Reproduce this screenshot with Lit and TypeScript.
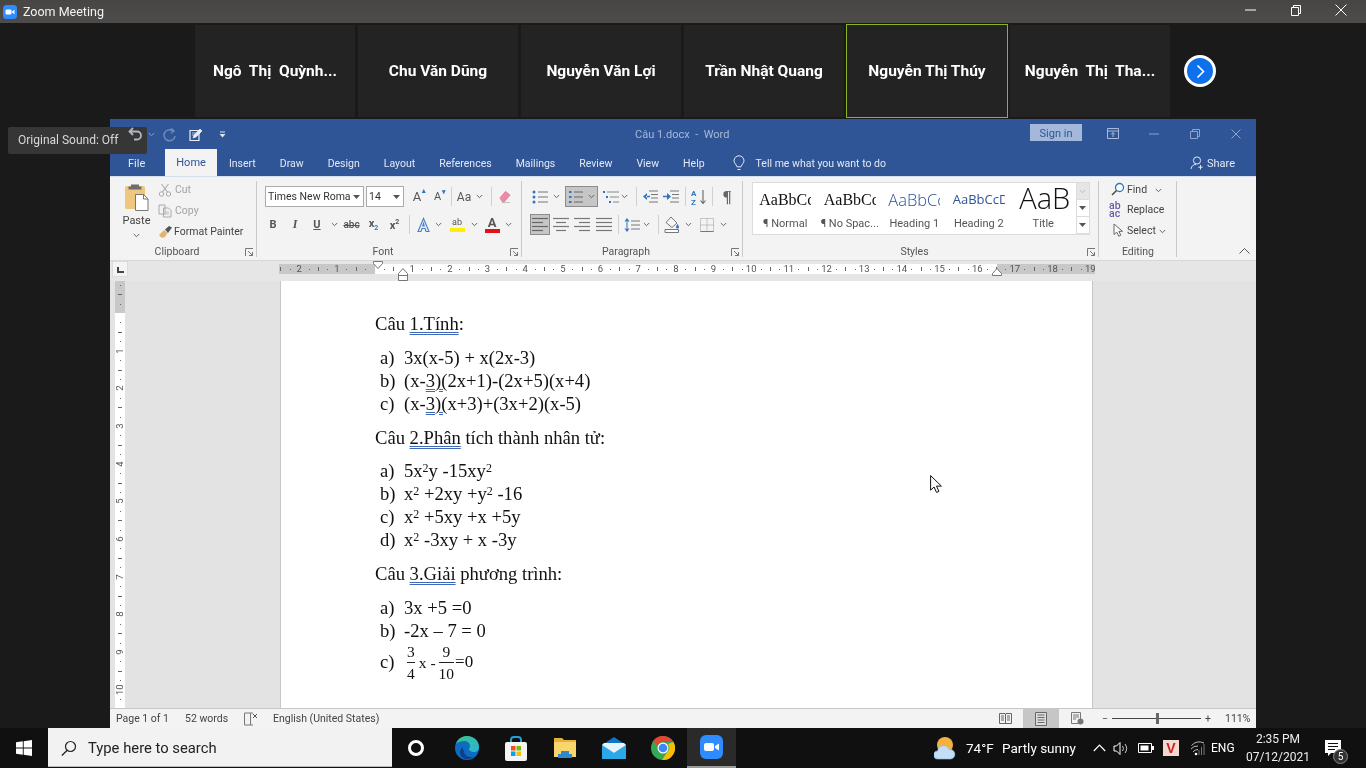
import { LitElement, html, css, nothing } from 'lit';
import { customElement } from 'lit/decorators.js';

const chev = (c = '#666') => html`<svg width="7" height="5" viewBox="0 0 7 5"><path d="M.8 1l2.7 2.7L6.2 1" fill="none" stroke="${c}"/></svg>`;
const caret = html`<svg width="7" height="4" viewBox="0 0 7 4"><path d="M0 0h7L3.5 4z" fill="#555"/></svg>`;
const launcher = html`<svg width="9" height="9" viewBox="0 0 9 9"><path d="M.5 8V.5H8M3 3l4.500 4.500M7.500 4v3.500H4" fill="none" stroke="#777"/></svg>`;
const sep = html`<i class="sep"></i>`;

const lines = (rows: number[][], color = '#777') => html`<svg width="18" height="15" viewBox="0 0 18 15">${rows.map(
  ([x1, x2], i) => html`<svg><path d="M${x1} ${1.5 + i * 4}H${x2}" stroke="${color}" stroke-width="1.2"/></svg>`,
)}</svg>`;

const icons = {
  zoomLogo: html`<svg width="14" height="14" viewBox="0 0 14 14"><rect width="14" height="14" rx="3.5" fill="#2d8cff"/><rect x="2.5" y="4.5" width="6" height="5" rx="1.2" fill="#fff"/><path d="M9 6.500l2.500-1.700v4.400L9 7.500z" fill="#fff"/></svg>`,
  undo: html`<svg width="16" height="18" viewBox="0 0 16 18"><path d="M5 2L1.500 5.500 5 9M2 5.500h7a4 4 0 0 1 0 8H6" fill="none" stroke="#aeb6c4" stroke-width="1.800"/></svg>`,
  redo: html`<svg width="14" height="16" viewBox="0 0 14 16"><path d="M8 1.500l3 2.500-3 2M10 4A5.500 5.500 0 1 0 12 9" fill="none" stroke="#6f8cbd" stroke-width="1.500"/></svg>`,
  touch: html`<svg width="15" height="15" viewBox="0 0 15 15"><path d="M1 3.500h9v10H1z" fill="none" stroke="#e8edf5" stroke-width="1.200"/><path d="M4 11l1-3 6-6 2 2-6 6zM3 6h4M3 8h2" fill="#e8edf5" stroke="#e8edf5" stroke-width=".7"/></svg>`,
  qatDrop: html`<svg width="7" height="7" viewBox="0 0 7 7"><path d="M1 1h5" stroke="#dfe6f2"/><path d="M.5 3h6L3.500 6.500z" fill="#dfe6f2"/></svg>`,
  ribbonDisp: html`<svg width="12" height="11" viewBox="0 0 12 11"><path d="M.5.500h11v10H.5zM.5 3h11M6 9V4.500M4 6.500l2-2 2 2" fill="none" stroke="#a9bcdc"/></svg>`,
  minW: html`<svg width="10" height="2" viewBox="0 0 10 2"><path d="M0 1h10" stroke="#8da4cb"/></svg>`,
  restoreW: html`<svg width="10" height="10" viewBox="0 0 10 10"><path d="M.5 2.500h7v7h-7zM2.500 2.500v-2h7v7h-2" fill="none" stroke="#8da4cb"/></svg>`,
  closeW: html`<svg width="10" height="10" viewBox="0 0 10 10"><path d="M.5.500l9 9M9.500.500l-9 9" stroke="#8da4cb"/></svg>`,
  bulb: html`<svg width="12" height="16" viewBox="0 0 12 16"><path d="M6 .8a5 5 0 0 0-5 5c0 2.200 2.200 3.400 3 6h4c.8-2.600 3-3.800 3-6a5 5 0 0 0-5-5zM4.500 14.500h3" fill="none" stroke="#e5ebf5"/></svg>`,
  share: html`<svg width="14" height="14" viewBox="0 0 14 14"><circle cx="7" cy="4.500" r="3.600" fill="none" stroke="#dfe6f2"/><path d="M1 13c.4-3 2.500-4.500 5-4.600M10.500 9v4.500M8.300 11.200h4.400" fill="none" stroke="#dfe6f2"/></svg>`,
  paste: html`<svg width="26" height="28" viewBox="0 0 26 28"><rect x="1" y="3" width="20" height="23" rx="1.500" fill="#eec67e"/><path d="M7 1.500h8v2h2.500v3h-13v-3H7z" fill="#6d6d6d"/><path d="M11.500 11.500h8l4.500 4.500v11.500h-12.500z" fill="#fff" stroke="#777"/><path d="M19.500 11.500V16H24" fill="none" stroke="#777"/></svg>`,
  cut: html`<svg width="14" height="14" viewBox="0 0 14 14"><path d="M3.500 1l6 8M10.500 1l-6 8" stroke="#aaa" stroke-width="1.100"/><circle cx="3.500" cy="11" r="2.200" fill="none" stroke="#aaa"/><circle cx="10.500" cy="11" r="2.200" fill="none" stroke="#aaa"/></svg>`,
  copy: html`<svg width="14" height="14" viewBox="0 0 14 14"><path d="M1 1h6v9H1zM5.500 4h5l2.500 2.500V13H5.500z" fill="#f3f3f3" stroke="#aaa"/><path d="M7 8h4M7 10h4" stroke="#bbb"/></svg>`,
  painter: html`<svg width="15" height="13" viewBox="0 0 15 13"><path d="M1 10l5-5 3.500 3-3 4.500H3z" fill="#e2b56f"/><path d="M7 4.500L11 1l3 1.500L10 8z" fill="#555"/></svg>`,
  eraser: html`<svg width="15" height="15" viewBox="0 0 15 15"><path d="M2 9l6-7 5 4-6 7H4.500z" fill="#ef8aa6" stroke="#d9688a" stroke-width=".6"/><path d="M4 14h9" stroke="#bbb"/></svg>`,
  textFx: html`<svg width="15" height="16" viewBox="0 0 15 16"><path d="M7.500 1.500L2 14.500h3l1-3h3l1 3h3zM6.800 9l.7-2.500.7 2.500z" fill="#e7eef8" stroke="#4a7fc4" stroke-width="1.100"/></svg>`,
  bullets: html`<svg width="16" height="14" viewBox="0 0 16 14"><path d="M6 2h10M6 7h10M6 12h10" stroke="#777" stroke-width="1.100"/><circle cx="2" cy="2" r="1.500" fill="#2f75c0"/><circle cx="2" cy="7" r="1.500" fill="#2f75c0"/><circle cx="2" cy="12" r="1.500" fill="#2f75c0"/></svg>`,
  numbers: html`<svg width="15" height="14" viewBox="0 0 15 14"><path d="M6 2h9M6 7h9M6 12h9" stroke="#666" stroke-width="1.100"/><path d="M1 1h2.500v2H1zM1 6h2.500v2H1zM1 11h2.500v2H1z" fill="#2f75c0"/></svg>`,
  multi: html`<svg width="17" height="14" viewBox="0 0 17 14"><path d="M5 2h12M8 7h9M11 12h6" stroke="#888" stroke-width="1.100"/><path d="M1 1h2v2H1zM4 6h2v2H4zM7 11h2v2H7z" fill="#2f75c0"/></svg>`,
  outdent: html`<svg width="16" height="13" viewBox="0 0 16 13"><path d="M7 1h9M9 4.500h7M9 8h7M7 12h9" stroke="#777"/><path d="M5 3L1 6.500 5 10zM4 5.800h4v1.400H4z" fill="#2f75c0"/></svg>`,
  indent: html`<svg width="16" height="13" viewBox="0 0 16 13"><path d="M7 1h9M9 4.500h7M9 8h7M7 12h9" stroke="#777"/><path d="M4 3l4 3.500L4 10zM0 5.800h5v1.400H0z" fill="#2f75c0"/></svg>`,
  sort: html`<svg width="16" height="16" viewBox="0 0 16 16"><text x="0" y="7" font-size="8" font-family="Roboto" font-weight="700" fill="#2f75c0">A</text><text x="0" y="15.500" font-size="8" font-family="Roboto" font-weight="700" fill="#2f75c0">Z</text><path d="M12 1v13M9.500 11.500L12 14.500l2.500-3" fill="none" stroke="#666" stroke-width="1.100"/></svg>`,
  spacing: html`<svg width="16" height="16" viewBox="0 0 16 16"><path d="M7 4h9M7 8h9M7 12h9" stroke="#777"/><path d="M3 1L.5 4.500h5zM3 15l2.500-3.500h-5zM2.500 4h1v8h-1z" fill="#2f75c0"/></svg>`,
  shade: html`<svg width="16" height="17" viewBox="0 0 16 17"><path d="M7 1l6 6-5 4.500-6-5z" fill="#f6f6f6" stroke="#777"/><path d="M13.500 8s1.500 2 1.500 3a1.500 1.500 0 0 1-3 0c0-1 1.500-3 1.500-3z" fill="#2f75c0"/><path d="M1 13.500h13.500v3H1z" fill="#fff" stroke="#777"/></svg>`,
  borders: html`<svg width="14" height="14" viewBox="0 0 14 14"><path d="M.5.500h13v13H.5zM7 .5v13M.5 7h13" fill="none" stroke="#999" stroke-dasharray="1 1"/><path d="M.5 13.500h13" stroke="#777"/></svg>`,
  find: html`<svg width="14" height="14" viewBox="0 0 14 14"><circle cx="8.500" cy="5.500" r="4" fill="#fff" stroke="#2f75c0" stroke-width="1.300"/><path d="M5.500 8.500L1 13" stroke="#444" stroke-width="1.500"/></svg>`,
  select: html`<svg width="10" height="14" viewBox="0 0 10 14"><path d="M1 1v10.500l2.800-2.300 2 4 2-1-2-3.900H9.500z" fill="#fff" stroke="#666"/></svg>`,
  collapse: html`<svg width="11" height="6" viewBox="0 0 11 6"><path d="M.5 5.500l5-5 5 5" fill="none" stroke="#555"/></svg>`,
  book: html`<svg width="14" height="14" viewBox="0 0 14 14"><path d="M.5 1h6v12h-6zM6.500 1H9M6.500 13H9" fill="none" stroke="#777"/><path d="M9 2l4 4M13 2L9 6" stroke="#555"/></svg>`,
  readMode: html`<svg width="13" height="13" viewBox="0 0 13 13"><path d="M.5 1.500h5.500l.5.5.5-.5h5.500v10H7l-.5.5-.5-.5H.5zM6.500 2v10M2 4h3M2 6h3M2 8h3M8 4h3M8 6h3M8 8h3" fill="#f3f3f3" stroke="#666"/></svg>`,
  printMode: html`<svg width="12" height="14" viewBox="0 0 12 14"><path d="M.5.500h11v13H.5zM2.500 3h7M2.500 5.500h7M2.500 8h7M2.500 10.500h7" fill="#ddd" stroke="#666"/></svg>`,
  webMode: html`<svg width="13" height="13" viewBox="0 0 13 13"><path d="M.5.500h9v11H.5zM2 3h6M2 5h6M2 7h3" fill="#f3f3f3" stroke="#777"/><circle cx="9.500" cy="9.500" r="3" fill="#777"/></svg>`,
  windows: html`<svg width="16" height="16" viewBox="0 0 16 16"><path d="M0 2.300l6.800-1v6.200H0zM7.700 1.200L16 0v7.500H7.700zM0 8.500h6.800v6.200l-6.800-1zM7.700 8.500H16V16l-8.300-1.200z" fill="#fff"/></svg>`,
  search: html`<svg width="16" height="16" viewBox="0 0 16 16"><circle cx="9.500" cy="6.500" r="5" fill="none" stroke="#222" stroke-width="1.200"/><path d="M6 10.500L.8 15.500" stroke="#222" stroke-width="1.300"/></svg>`,
  edge: html`<svg width="24" height="26" viewBox="0 0 24 26"><defs><linearGradient id="eg" x1="0" y1="0" x2="1" y2="1"><stop offset="0" stop-color="#39c481"/><stop offset="1" stop-color="#2cb2d8"/></linearGradient></defs><circle cx="12" cy="13" r="12" fill="#0b6cc0"/><path d="M1 9C3 3 8 1 12 1c7 0 12 5 12 11 0 3-2 5-5 5-2 0-5-1-5-3 0-1 1-1 1-3 0-3-3-5-6-5S3 7 1 9z" fill="url(#eg)"/><path d="M9 16c0 4 4 7 9 6-3 3-9 3-12-1-2-3-1-7 2-9-.5 1.500 0 3 1 4z" fill="#0d3f8f"/></svg>`,
  store: html`<svg width="24" height="25" viewBox="0 0 24 25"><path d="M7 7V4a3 3 0 0 1 3-3h4a3 3 0 0 1 3 3v3" fill="none" stroke="#1ea0d8" stroke-width="2"/><rect x="1" y="6" width="22" height="19" rx="2" fill="#f4f4f4"/><rect x="7" y="10" width="4.500" height="4.500" fill="#f25022"/><rect x="12.500" y="10" width="4.500" height="4.500" fill="#7fba00"/><rect x="7" y="15.500" width="4.500" height="4.500" fill="#00a4ef"/><rect x="12.500" y="15.500" width="4.500" height="4.500" fill="#ffb900"/></svg>`,
  folder: html`<svg width="22" height="22" viewBox="0 0 22 22"><path d="M0 1h8l2 2h12v17H0z" fill="#e8b237"/><path d="M0 5h22v15H0z" fill="#f9d56e"/><path d="M7 14h8v3h3v4H4v-4h3z" fill="#2f88c9"/></svg>`,
  mail: html`<svg width="24" height="22" viewBox="0 0 24 22"><path d="M0 8L12 0l12 8v14H0z" fill="#0f75c9"/><path d="M0 8l12 8 12-8v14H0z" fill="#29a8ea"/><path d="M2 6h20l2 2-12 8L0 8z" fill="#e8f4fb"/></svg>`,
  chrome: html`<svg width="24" height="24" viewBox="0 0 24 24"><circle cx="12" cy="12" r="12" fill="#34a853"/><path d="M12 0a12 12 0 0 1 10.400 6H12a6 6 0 0 0-5.600 3.700L2.300 5A12 12 0 0 1 12 0z" fill="#ea4335"/><path d="M22.400 6A12 12 0 0 1 11 24l5.500-8.300A6 6 0 0 0 17 8L22.400 6z" fill="#fbbc05"/><circle cx="12" cy="12" r="5.500" fill="#fff"/><circle cx="12" cy="12" r="4.300" fill="#4285f4"/></svg>`,
  zoomApp: html`<svg width="23" height="24" viewBox="0 0 23 24"><rect width="23" height="24" rx="6" fill="#2d8cff"/><rect x="4" y="8" width="10" height="8" rx="2" fill="#fff"/><path d="M15 11l4-2.500v7L15 13z" fill="#fff"/></svg>`,
  weather: html`<svg width="22" height="24" viewBox="0 0 22 24"><circle cx="11" cy="9" r="8" fill="#f5b13d"/><path d="M4 23a4 4 0 0 1-.5-8A6 6 0 0 1 15 13.500 4.800 4.800 0 0 1 17 23z" fill="#c4def5" stroke="#8fc0e8" stroke-width=".6"/></svg>`,
  trayUp: html`<svg width="13" height="8" viewBox="0 0 13 8"><path d="M.8 7l5.700-6 5.700 6" fill="none" stroke="#fff" stroke-width="1.200"/></svg>`,
  speaker: html`<svg width="16" height="15" viewBox="0 0 16 15"><path d="M1 5h2.500L7 1.500v12L3.500 10H1z" fill="none" stroke="#fff"/><path d="M9.500 5a4 4 0 0 1 0 5M12 3a7 7 0 0 1 0 9" fill="none" stroke="#ccc"/></svg>`,
  battery: html`<svg width="16" height="10" viewBox="0 0 16 10"><path d="M.5.500h13v9H.5z" fill="none" stroke="#fff"/><path d="M2.500 2.500h8v5h-8zM14 3h2v4h-2z" fill="#fff"/></svg>`,
  wifi: html`<svg width="15" height="15" viewBox="0 0 15 15"><path d="M1 8a8 8 0 0 1 7-3M3 11a6 6 0 0 1 5-2.500M1.500 4.500A11 11 0 0 1 14 2" fill="none" stroke="#bbb"/><circle cx="6" cy="13" r="1.300" fill="#fff"/><path d="M9 14V9M11.500 14V6M14 14V3" stroke="#777"/></svg>`,
  notes: html`<svg width="18" height="17" viewBox="0 0 18 17"><path d="M0 0h16v13H6l-3 3v-3H0z" fill="#fff"/><path d="M3 3.500h10M3 6.500h10M3 9.500h7" stroke="#101010"/></svg>`,
  pointer: html`<svg width="12" height="18" viewBox="0 0 12 18"><path d="M.6.600v14.600l3.500-3.200 2.400 5.400 2.400-1-2.400-5.300h4.900z" fill="#fff" stroke="#111"/></svg>`,
};

@customElement('word-ribbon')
export class WordRibbon extends LitElement {
  static styles = css`
    :host { display: flex; height: 84px; box-sizing: border-box; background: #f3f3f3; border-top: 1px solid #d5deec; color: #444; font: 10.500px Roboto, sans-serif; }
    .group { position: relative; box-sizing: border-box; display: flex; flex-direction: column; }
    .group::after { content: ''; position: absolute; right: 0; top: 4px; bottom: 3px; width: 1px; background: #c9c9c9; }
    .label { position: absolute; left: 0; right: 13px; bottom: 1px; text-align: center; line-height: 15px; color: #555; }
    .edit .label { right: 0; }
    .launch { position: absolute; right: 3px; bottom: 3px; line-height: 0; }
    .clip { width: 147px; flex-direction: row; padding-top: 2px; }
    .paste { width: 48px; display: flex; flex-direction: column; align-items: center; padding: 4px 0 0 5px; box-sizing: border-box; }
    .paste span { line-height: 16px; margin-top: 2px; font-size: 11px; }
    .paste > svg:last-child { margin-top: 4px; }
    .clip-list { display: flex; flex-direction: column; }
    .clip-row { height: 21px; display: flex; align-items: center; gap: 3px; }
    .clip-row.off { color: #a3a3a3; }
    .clip-row.paint { gap: 1px; }
    .clip-row svg { flex: none; }
    .font { width: 265px; padding: 9px 0 0 8px; }
    .para { width: 221px; padding: 9px 0 0 8px; }
    .row { display: flex; height: 21px; align-items: center; margin-bottom: 7px; }
    .row.pull { margin-left: -3px; }
    .cell { display: flex; align-items: center; justify-content: center; height: 21px; flex: none; }
    .cell.sel { background: #c6c6c6; box-shadow: inset 0 0 0 1px #8c8c8c; }
    .sep { display: block; width: 1px; height: 19px; background: #d0d0d0; }
    .box { display: flex; align-items: center; justify-content: space-between; box-sizing: border-box; height: 21px; border: 1px solid #ababab; background: #fff; color: #333; padding: 0 3px 0 2px; flex: none; white-space: nowrap; overflow: hidden; }
    .glyph { color: #555; font-weight: 700; font-size: 11px; }
    .glyph.serif { font-family: 'Liberation Serif', serif; font-style: italic; font-size: 12px; }
    .glyph.ul { text-decoration: underline; }
    .fontA { font-size: 13px; font-weight: 400; position: relative; }
    .fontA b { position: absolute; top: -2px; right: -5px; font-size: 7px; color: #2f75c0; }
    .hl { display: flex; flex-direction: column; align-items: center; font-size: 9px; line-height: 10px; color: #555; }
    .hl i { width: 15px; height: 4px; margin-top: 1px; }
    .hl .big { font-size: 13px; font-weight: 700; line-height: 11px; }
    .styles { width: 356px; padding: 5px 0 0 9px; }
    .gallery { display: flex; width: 338px; height: 53px; box-sizing: border-box; background: #fff; border: 1px solid #dcdcdc; }
    .style { width: 64.500px; flex: none; display: flex; flex-direction: column; align-items: center; }
    .style .pv { width: 52px; height: 33px; overflow: hidden; white-space: nowrap; color: #111; font: 16px/33px 'Liberation Serif', serif; }
    .style .nm { line-height: 16px; color: #555; white-space: nowrap; font-size: 11px; }
    .style.h1 .pv { font: 300 16.500px/33px 'Open Sans', sans-serif; color: #2f5496; }
    .style.h2 .pv { font: 400 13px/33px 'Open Sans', sans-serif; color: #2f5496; }
    .style.title .pv { font: 300 29px/29px 'Open Sans', sans-serif; color: #111; padding-left: 2px; box-sizing: border-box; }
    .scroll { margin-left: auto; width: 13px; display: flex; flex-direction: column; border-left: 1px solid #dcdcdc; }
    .scroll span { flex: 1; display: flex; align-items: center; justify-content: center; border-bottom: 1px solid #dcdcdc; }
    .scroll span:first-child { background: #e6e6e6; }
    .edit { width: 78px; padding: 2px 0 0 10px; }
    .edit-row { height: 20.500px; display: flex; align-items: center; }
    .edit-row .ic { width: 18px; display: flex; justify-content: center; }
    .edit-row .abac { justify-content: flex-start; font-size: 10.500px; line-height: 8px; color: #6b5aa8; font-weight: 500; }
    .collapse { margin-left: 62px; margin-top: 71px; line-height: 0; }
  `;

  private cells(list: [number, unknown, string?][]) {
    return list.map(([w, c, cls]) => html`<span class="cell ${cls ?? ''}" style="width:${w}px">${c}</span>`);
  }

  render() {
    const c = chev();
    return html`
      <div class="group clip">
        <div class="paste">${icons.paste}<span>Paste</span>${c}</div>
        <div class="clip-list">
          <div class="clip-row off">${icons.cut}<span>Cut</span></div>
          <div class="clip-row off">${icons.copy}<span>Copy</span></div>
          <div class="clip-row paint">${icons.painter}<span>Format Painter</span></div>
        </div>
        <span class="label">Clipboard</span><span class="launch">${launcher}</span>
      </div>

      <div class="group font">
        <div class="row">
          <span class="box" style="width:99px">Times New Roma ${caret}</span>
          <span style="width:2px"></span>
          <span class="box" style="width:38px">14 ${caret}</span>
          ${this.cells([
            [3, nothing],
            [20, html`<span class="glyph fontA">A<b>▴</b></span>`],
            [21, html`<span class="glyph fontA" style="font-size:11px">A<b>▾</b></span>`],
            [6, sep],
            [20, html`<span style="font-size:12px;color:#555">Aa</span>`],
            [10, c],
            [14, sep],
            [14, icons.eraser],
          ])}
        </div>
        <div class="row pull">
          ${this.cells([
            [22, html`<span class="glyph">B</span>`],
            [22, html`<span class="glyph serif">I</span>`],
            [22, html`<span class="glyph ul">U</span>`],
            [12, c],
            [23, html`<s class="glyph" style="font-size:10px;font-weight:500">abc</s>`],
            [21, html`<span class="glyph">x<sub style="font-size:7px;color:#2f75c0">2</sub></span>`],
            [21, html`<span class="glyph">x<sup style="font-size:7px">2</sup></span>`],
            [8, sep],
            [20, icons.textFx],
            [11, c],
            [26, html`<span class="hl"><span>ab</span><i style="background:#ffef00"></i></span>`],
            [8, c],
            [2, nothing],
            [24, html`<span class="hl"><span class="big">A</span><i style="background:#e0101c"></i></span>`],
            [8, c],
          ])}
        </div>
        <span class="label">Font</span><span class="launch">${launcher}</span>
      </div>

      <div class="group para">
        <div class="row">
          ${this.cells([
            [20, icons.bullets],
            [12, c],
            [3, nothing],
            [33, html`${icons.numbers}<span style="width:5px"></span>${c}`, 'sel'],
            [2, nothing],
            [20, icons.multi],
            [9, c],
            [3, nothing],
            [8, sep],
            [20, icons.outdent],
            [21, icons.indent],
            [8, sep],
            [20, icons.sort],
            [6, sep],
            [2, nothing],
            [20, html`<span style="font:700 17px 'Liberation Serif',serif;color:#666">¶</span>`],
          ])}
        </div>
        <div class="row">
          ${this.cells([
            [20, lines([[1, 17], [1, 12], [1, 17], [1, 12]], '#666'), 'sel'],
            [1, nothing],
            [20, lines([[1, 17], [4, 14], [1, 17], [4, 14]])],
            [1, nothing],
            [20, lines([[1, 17], [6, 17], [1, 17], [6, 17]])],
            [2, nothing],
            [20, lines([[1, 17], [1, 17], [1, 17], [1, 17]])],
            [8, sep],
            [20, icons.spacing],
            [8, c],
            [4, nothing],
            [8, sep],
            [20, icons.shade],
            [12, c],
            [3, nothing],
            [20, icons.borders],
            [12, c],
          ])}
        </div>
        <span class="label">Paragraph</span><span class="launch">${launcher}</span>
      </div>

      <div class="group styles">
        <div class="gallery">
          <div class="style"><span class="pv">AaBbCc</span><span class="nm">¶ Normal</span></div>
          <div class="style"><span class="pv">AaBbCc</span><span class="nm">¶ No Spac...</span></div>
          <div class="style h1"><span class="pv">AaBbCc</span><span class="nm">Heading 1</span></div>
          <div class="style h2"><span class="pv">AaBbCcD</span><span class="nm">Heading 2</span></div>
          <div class="style title"><span class="pv">AaB</span><span class="nm">Title</span></div>
          <div class="scroll"><span>${chev('#bbb')}</span><span>${caret}</span><span>${caret}</span></div>
        </div>
        <span class="label">Styles</span><span class="launch">${launcher}</span>
      </div>

      <div class="group edit">
        <div class="edit-row"><span class="ic">${icons.find}</span><span>Find</span><span style="margin-left:8px">${c}</span></div>
        <div class="edit-row"><span class="ic abac">ab<br />ac</span><span>Replace</span></div>
        <div class="edit-row"><span class="ic">${icons.select}</span><span>Select</span><span style="margin-left:3px">${c}</span></div>
        <span class="label">Editing</span>
      </div>
      <div class="collapse">${icons.collapse}</div>
    `;
  }
}

@customElement('word-window')
export class WordWindow extends LitElement {
  static styles = css`
    :host { display: flex; flex-direction: column; width: 1146px; height: 609px; margin-left: 110px; font: 11px Roboto, sans-serif; }
    .title { height: 31px; background: #2f5597; display: flex; align-items: center; position: relative; flex: none; }
    /* the undo arrow shows through the zoom tooltip, so the qat sits above it */
    .qat { display: flex; align-items: center; padding-left: 18px; position: relative; z-index: 2; }
    .qat svg { flex: none; }
    .qat .s4 { width: 4px; }
    .qat .s8 { width: 8px; }
    .qat .s12 { width: 12px; }
    .qat .s15 { width: 15px; }
    .doc-title { position: absolute; left: 525px; top: 9px; line-height: 14px; color: #a6b8d8; }
    .signin { position: absolute; left: 920px; top: 5px; width: 52px; height: 17px; background: #a3b8da; color: #2f5597; text-align: center; line-height: 19px; }
    .wctl { margin-left: auto; display: flex; padding-bottom: 2px; }
    .wctl span { width: 41px; display: flex; justify-content: center; align-items: center; height: 14px; }
    .tabs { height: 26px; background: #2f5597; display: flex; align-items: flex-end; color: #e3e9f4; flex: none; position: relative; font-size: 10.500px; }
    .tab { height: 26px; line-height: 27px; padding: 0 12px; }
    .tab.file { margin: 0 8px 0 6px; font-size: 11px; }
    .tab.on { background: #f3f3f3; color: #2f5597; padding: 0 11px; height: 27px; font-size: 11px; }
    .tell { display: flex; align-items: center; gap: 11px; height: 26px; margin-left: 16px; }
    .sharebtn { margin-left: auto; display: flex; align-items: center; gap: 3px; height: 26px; margin-right: 21px; font-size: 11px; }

    .rulerbar { height: 21px; background: #e6e6e6; border-top: 1px solid #d8d8d8; box-sizing: border-box; position: relative; flex: none; display: flex; }
    .corner { width: 14px; height: 14px; margin: 1px 0 0 3px; background: #f4f4f4; box-shadow: 0 0 0 1px #dcdcdc; position: relative; flex: none; }
    .corner::after { content: ''; position: absolute; left: 4px; top: 5px; width: 5px; height: 4px; border-left: 2px solid #444; border-bottom: 2px solid #444; }
    .hruler { position: relative; width: 816px; height: 10px; margin: 3px 0 0 152px; background: #c8c8c8; font-size: 9.500px; color: #555; }
    .hruler .white { position: absolute; left: 96px; top: 0; width: 622px; height: 10px; background: #fff; }
    .mark { position: absolute; top: 0; line-height: 10px; transform: translateX(-50%); }
    .dot { position: absolute; top: 5px; width: 1px; height: 1px; background: #666; }
    .tick { position: absolute; top: 3px; width: 1px; height: 4px; background: #666; }
    .indent { position: absolute; line-height: 0; }

    .docarea { flex: 1; background: #e3e3e3; display: flex; overflow: hidden; min-height: 0; }
    .vruler { position: relative; width: 10px; margin-left: 5px; height: 427px; background: #fff; color: #555; font-size: 9.500px; flex: none; }
    .vruler .grey { position: absolute; left: 0; top: 0; width: 10px; height: 32px; background: #c8c8c8; }
    .vmark { position: absolute; left: 0; width: 10px; text-align: center; line-height: 10px; transform: translateY(-50%) rotate(-90deg); }
    .vdot { position: absolute; left: 5px; width: 1px; height: 1px; background: #666; }
    .vtick { position: absolute; left: 3px; width: 4px; height: 1px; background: #666; }

    .page { margin-left: 155px; width: 813px; box-sizing: border-box; background: #fff; border-left: 1px solid #c6c6c6; border-right: 1px solid #c6c6c6; padding: 31px 0 0 94px; font: 18.600px/23px 'Liberation Serif', serif; color: #111; }
    .q { margin: 0 0 10.500px; }
    .list { margin: 0 0 11px; padding: 0 0 0 5px; }
    .li { display: flex; }
    .li .m { width: 24px; flex: none; }
    .wavy { text-decoration: underline double #3f68b8; text-decoration-thickness: 1px; text-underline-offset: 2px; }
    sup { font-size: 12px; line-height: 0; vertical-align: 5px; }
    .li.fr { align-items: center; height: 44px; margin-top: -1px; }
    .li.fr .m { margin-top: -3px; }
    .mathrow { display: flex; align-items: center; font-size: 15.500px; padding-left: 3px; }
    .frac { display: flex; flex-direction: column; align-items: center; line-height: 21px; }
    .frac i { display: block; align-self: stretch; height: 1px; background: #222; }
    .frac + span { margin: 0 3px 0 4px; }
    .frac + .eq { font-size: 17px; margin: 0 0 3px 1px; }

    .status { height: 20px; background: #f3f3f3; border-top: 1px solid #c6c6c6; box-sizing: border-box; display: flex; align-items: center; font-size: 10.500px; color: #444; flex: none; }
    .status .a { margin-left: 6px; width: 69px; }
    .status .b { width: 59px; }
    .status .c { width: 29px; line-height: 0; }
    .right { margin-left: auto; display: flex; align-items: center; height: 19px; }
    .vm { width: 36px; height: 19px; display: flex; align-items: center; justify-content: center; }
    .vm.on { background: #c6c6c6; }
    .zoomer { display: flex; align-items: center; margin-left: 7px; }
    .track { position: relative; width: 89px; height: 1px; background: #444; margin: 0 4px; }
    .track i { position: absolute; left: 44px; top: -5px; width: 3px; height: 11px; background: #666; }
    .pct { width: 31px; margin-left: 14px; }
  `;

  private hMarks() {
    const out = [];
    const q = 37.67 / 4;
    for (let k = -10; k <= 76; k++) {
      const x = 95.5 + k * q;
      if (k === 0) continue;
      if (k % 4 === 0) out.push(html`<span class="mark" style="left:${x}px">${Math.abs(k / 4)}</span>`);
      else if (Math.abs(k % 4) === 2) out.push(html`<i class="tick" style="left:${x}px"></i>`);
      else out.push(html`<i class="dot" style="left:${x}px"></i>`);
    }
    return out;
  }

  private vMarks() {
    const out = [];
    const q = 37.67 / 4;
    for (let k = -3; k <= 42; k++) {
      const y = 32 + k * q;
      if (k === 0) continue;
      if (k % 4 === 0) out.push(html`<span class="vmark" style="top:${y}px">${k / 4}</span>`);
      else if (Math.abs(k % 4) === 2) out.push(html`<i class="vtick" style="top:${y}px"></i>`);
      else out.push(html`<i class="vdot" style="top:${y}px"></i>`);
    }
    return out;
  }

  render() {
    const tabs = ['Insert', 'Draw', 'Design', 'Layout', 'References', 'Mailings', 'Review', 'View', 'Help'];
    return html`
      <div class="title">
        <div class="qat">${icons.undo}<i class="s4"></i>${chev('#8da4cb')}<i class="s8"></i>${icons.redo}<i class="s12"></i>${icons.touch}<i class="s15"></i>${icons.qatDrop}</div>
        <span class="doc-title">Câu 1.docx &nbsp;-&nbsp; Word</span>
        <span class="signin">Sign in</span>
        <div class="wctl">
          <span>${icons.ribbonDisp}</span><span>${icons.minW}</span><span>${icons.restoreW}</span><span>${icons.closeW}</span>
        </div>
      </div>
      <div class="tabs">
        <span class="tab file">File</span>
        <span class="tab on">Home</span>
        ${tabs.map((t) => html`<span class="tab">${t}</span>`)}
        <span class="tell">${icons.bulb}<span>Tell me what you want to do</span></span>
        <span class="sharebtn">${icons.share}<span>Share</span></span>
      </div>
      <word-ribbon></word-ribbon>
      <div class="rulerbar">
        <span class="corner"></span>
        <div class="hruler">
          <span class="white"></span>
          ${this.hMarks()}
          <span class="indent" style="left:94px;top:-3px"><svg width="10" height="8" viewBox="0 0 10 8"><path d="M.5.500h9v2L5 7.500.5 2.500z" fill="#fff" stroke="#777"/></svg></span>
          <span class="indent" style="left:119px;top:4px"><svg width="10" height="13" viewBox="0 0 10 13"><path d="M.5 5.500L5 .5l4.500 5v7h-9zM.5 7.500h9" fill="#fff" stroke="#777"/></svg></span>
          <span class="indent" style="left:713px;top:4px"><svg width="10" height="8" viewBox="0 0 10 8"><path d="M.5 7.500v-2L5 .5l4.500 5v2z" fill="#fff" stroke="#777"/></svg></span>
        </div>
      </div>
      <div class="docarea">
        <div class="vruler"><span class="grey"></span>${this.vMarks()}</div>
        <div class="page">
          <p class="q">Câu <span class="wavy">1.Tính</span>:</p>
          <div class="list">
            <div class="li"><span class="m">a)</span><span>3x(x-5) + x(2x-3)</span></div>
            <div class="li"><span class="m">b)</span><span>(x-<span class="wavy">3)(</span>2x+1)-(2x+5)(x+4)</span></div>
            <div class="li"><span class="m">c)</span><span>(x-<span class="wavy">3)(</span>x+3)+(3x+2)(x-5)</span></div>
          </div>
          <p class="q">Câu <span class="wavy">2.Phân</span> tích thành nhân tử:</p>
          <div class="list">
            <div class="li"><span class="m">a)</span><span>5x<sup>2</sup>y -15xy<sup>2</sup></span></div>
            <div class="li"><span class="m">b)</span><span>x<sup>2</sup> +2xy +y<sup>2</sup> -16</span></div>
            <div class="li"><span class="m">c)</span><span>x<sup>2</sup> +5xy +x +5y</span></div>
            <div class="li"><span class="m">d)</span><span>x<sup>2</sup> -3xy + x -3y</span></div>
          </div>
          <p class="q">Câu <span class="wavy">3.Giải</span> phương trình:</p>
          <div class="list">
            <div class="li"><span class="m">a)</span><span>3x +5 =0</span></div>
            <div class="li"><span class="m">b)</span><span>-2x – 7 = 0</span></div>
            <div class="li fr">
              <span class="m">c)</span>
              <span class="mathrow">
                <span class="frac"><span>3</span><i></i><span>4</span></span>
                <span>x -</span>
                <span class="frac"><span>9</span><i></i><span>10</span></span>
                <span class="eq">=0</span>
              </span>
            </div>
          </div>
        </div>
      </div>
      <div class="status">
        <span class="a">Page 1 of 1</span><span class="b">52 words</span><span class="c">${icons.book}</span><span>English (United States)</span>
        <div class="right">
          <span class="vm">${icons.readMode}</span>
          <span class="vm on">${icons.printMode}</span>
          <span class="vm">${icons.webMode}</span>
          <div class="zoomer"><span>−</span><span class="track"><i></i></span><span>+</span></div>
          <span class="pct">111%</span>
        </div>
      </div>
    `;
  }
}

@customElement('win-taskbar')
export class WinTaskbar extends LitElement {
  static styles = css`
    :host { display: flex; height: 40px; background: #101010; color: #fff; font: 13px Roboto, sans-serif; align-items: center; flex: none; }
    .start { width: 48px; display: flex; justify-content: center; }
    .search { width: 344px; height: 39px; background: #f2f2f2; color: #222; box-sizing: border-box; border-bottom: 1px solid #bbb; display: flex; align-items: center; padding: 2px 0 0 13px; gap: 11px; font-size: 14.800px; margin-top: -1px; }
    .cortana { width: 48px; display: flex; justify-content: center; }
    .cortana i { width: 10px; height: 10px; border: 3px solid #fff; border-radius: 50%; }
    .apps { display: flex; margin-left: 2px; }
    .app { width: 49px; height: 40px; display: flex; align-items: center; justify-content: center; box-sizing: border-box; }
    .app.active { background: #2a2a2a; border-bottom: 2px solid #9a9a9a; }
    .tray { margin-left: 196px; display: flex; align-items: center; height: 40px; }
    .tcell { display: flex; align-items: center; justify-content: center; flex: none; }
    .temp { margin-left: 8px; width: 36px; font-size: 13.500px; }
    .wx { font-size: 13.500px; width: 87px; }
    .v { width: 16px; height: 16px; background: #f1d9d0; color: #cf1f1f; font: 700 14px/16px 'Liberation Sans', sans-serif; text-align: center; }
    .eng { width: 26px; font-size: 12px; }
    .clock { width: 78px; text-align: center; font-size: 12px; line-height: 18px; color: #eee; margin-left: 2px; }
    .notif { position: relative; margin-left: 8px; line-height: 0; }
    .badge { position: absolute; left: 8px; top: 9px; width: 15px; height: 15px; border-radius: 50%; background: #333; border: 1px solid #888; box-sizing: border-box; font-size: 10px; line-height: 13px; text-align: center; color: #fff; }
  `;

  render() {
    const apps = [icons.edge, icons.store, icons.folder, icons.mail, icons.chrome];
    return html`
      <span class="start">${icons.windows}</span>
      <div class="search">${icons.search}<span>Type here to search</span></div>
      <span class="cortana"><i></i></span>
      <div class="apps">
        ${apps.map((a) => html`<span class="app">${a}</span>`)}
        <span class="app active">${icons.zoomApp}</span>
      </div>
      <div class="tray">
        <span class="tcell" style="width:26px">${icons.weather}</span>
        <span class="temp">74°F</span>
        <span class="wx">Partly sunny</span>
        <span class="tcell" style="width:20px">${icons.trayUp}</span>
        <span class="tcell" style="width:24px">${icons.speaker}</span>
        <span class="tcell" style="width:26px">${icons.battery}</span>
        <span class="tcell" style="width:24px"><span class="v">V</span></span>
        <span class="tcell" style="width:28px">${icons.wifi}</span>
        <span class="eng">ENG</span>
        <div class="clock">2:35 PM<br />07/12/2021</div>
        <span class="notif">${icons.notes}<span class="badge">5</span></span>
      </div>
    `;
  }
}

@customElement('app-root')
export class AppRoot extends LitElement {
  static styles = css`
    :host { display: flex; flex-direction: column; position: relative; width: 1366px; height: 768px; background: #1a1a1a; overflow: hidden; font-family: Roboto, sans-serif; filter: blur(0.35px); }
    .bar { height: 23px; flex: none; background: linear-gradient(#474645, #4d4c4a); display: flex; align-items: center; color: #f2f2f2; font-size: 12.500px; padding-left: 3px; gap: 6px; }
    .ctl { margin-left: auto; display: flex; margin-right: 3px; margin-top: -3px; }
    .ctl span { width: 45px; height: 12px; display: flex; justify-content: center; align-items: center; line-height: 0; }
    .strip { height: 96px; flex: none; display: flex; padding: 2px 0 0 195px; gap: 3px; box-sizing: border-box; align-items: flex-start; }
    .tile { width: 160px; height: 92px; background: #232323; color: #fff; display: flex; align-items: center; justify-content: center; font: 700 15.500px 'Roboto', sans-serif; box-sizing: border-box; white-space: pre; }
    .tile.on { outline: 1px solid #8ab51e; }
    .next { width: 26px; height: 26px; margin: 30px 0 0 11px; border-radius: 50%; background: #0e71eb; border: 3px solid #fff; display: flex; align-items: center; justify-content: center; flex: none; }
    .tip { position: absolute; left: 8px; top: 127px; width: 139px; height: 27px; box-sizing: border-box; padding-left: 10px; background: #363636; border-radius: 2px; color: #d8d8d8; font-size: 12px; line-height: 26px; z-index: 1; }
    .cursor { position: absolute; left: 930px; top: 475px; line-height: 0; }
  `;

  render() {
    const people = ['Ngô  Thị  Quỳnh...', 'Chu Văn Dũng', 'Nguyễn Văn Lợi', 'Trần Nhật Quang', 'Nguyễn Thị Thúy', 'Nguyễn  Thị  Tha...'];
    return html`
      <div class="bar">
        ${icons.zoomLogo}<span>Zoom Meeting</span>
        <div class="ctl">
          <span><svg width="11" height="2" viewBox="0 0 11 2"><path d="M0 1h11" stroke="#fff"/></svg></span>
          <span><svg width="10" height="11" viewBox="0 0 10 11"><path d="M.5 2.500h7v8h-7zM2.500 2.500v-2h7v8h-2" fill="none" stroke="#fff"/></svg></span>
          <span><svg width="12" height="12" viewBox="0 0 12 12"><path d="M.5.500l11 11M11.500.500l-11 11" stroke="#fff"/></svg></span>
        </div>
      </div>
      <div class="strip">
        ${people.map((p, i) => html`<div class="tile ${i === 4 ? 'on' : ''}">${p}</div>`)}
        <span class="next"><svg width="9" height="15" viewBox="0 0 9 15"><path d="M1.500 1.500l6 6-6 6" fill="none" stroke="#fff" stroke-width="1.600"/></svg></span>
      </div>
      <word-window></word-window>
      <win-taskbar></win-taskbar>
      <div class="tip">Original Sound: Off</div>
      <div class="cursor">${icons.pointer}</div>
    `;
  }
}
